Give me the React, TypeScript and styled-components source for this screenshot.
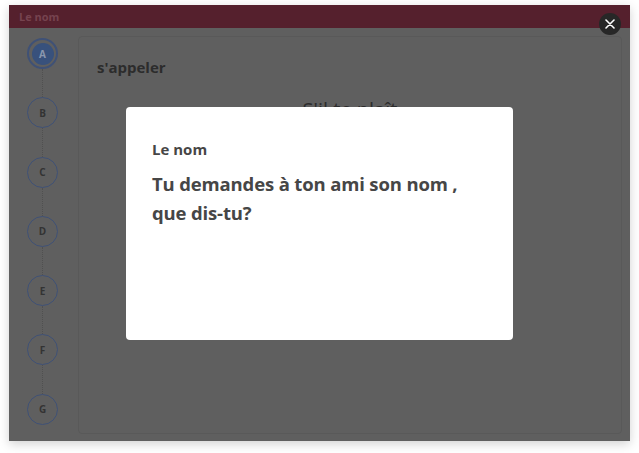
import React from 'react';
import styled, { createGlobalStyle } from 'styled-components';

const GlobalStyle = createGlobalStyle`
  html, body {
    margin: 0;
    padding: 0;
    background: #ffffff;
    font-family: "Open Sans", "Liberation Sans", sans-serif;
  }
`;

const steps = ['A', 'B', 'C', 'D', 'E', 'F', 'G'];

export default function App() {
  return (
    <>
      <GlobalStyle />
      <Page>
        <Window>
          <Header>
            <HeaderTitle>Le nom</HeaderTitle>
          </Header>
          <Body>
            <Rail>
              {steps.map((s, i) => (
                <React.Fragment key={s}>
                  {i > 0 && <Connector />}
                  <Step $active={i === 0}>
                    <StepLabel $active={i === 0}>{s}</StepLabel>
                  </Step>
                </React.Fragment>
              ))}
            </Rail>
            <Card>
              <CardTitle>s'appeler</CardTitle>
              <Prompt>S'il te plaît</Prompt>
            </Card>
          </Body>
          <Backdrop>
            <Modal>
              <ModalLabel>Le nom</ModalLabel>
              <ModalQuestion>
                Tu demandes à ton ami son nom ,<br />
                que dis-tu?
              </ModalQuestion>
            </Modal>
          </Backdrop>
          <CloseButton aria-label="Fermer">
            <svg width="10" height="10" viewBox="0 0 10 10">
              <path d="M1 1 L9 9 M9 1 L1 9" stroke="#ffffff" strokeWidth="1.6" strokeLinecap="round" />
            </svg>
          </CloseButton>
        </Window>
      </Page>
    </>
  );
}

const Page = styled.div`
  padding: 5px 9px 12px 9px;
  width: 639px;
  height: 453px;
  box-sizing: border-box;
`;

const Window = styled.div`
  position: relative;
  width: 621px;
  height: 436px;
  background: #5f5f5f;
  box-shadow: 0 3px 10px rgba(0, 0, 0, 0.18);
  display: flex;
  flex-direction: column;
`;

const Header = styled.div`
  height: 23px;
  background: #55202d;
  display: flex;
  align-items: center;
  padding-left: 10px;
  flex-shrink: 0;
`;

const HeaderTitle = styled.span`
  font-size: 11px;
  font-weight: 700;
  color: #76434f;
`;

const Body = styled.div`
  flex: 1;
  display: flex;
  padding: 8px 8px 7px 0;
  min-height: 0;
`;

const Rail = styled.div`
  width: 69px;
  flex-shrink: 0;
  display: flex;
  flex-direction: column;
  align-items: center;
  padding-top: 2px;
  padding-right: 2px;
  box-sizing: border-box;
`;

const Step = styled.div<{ $active?: boolean }>`
  width: 31px;
  height: 31px;
  border-radius: 50%;
  box-sizing: border-box;
  border: ${(p) => (p.$active ? '2px' : '1.5px')} solid #3f5176;
  display: flex;
  align-items: center;
  justify-content: center;
  flex-shrink: 0;
`;

const StepLabel = styled.span<{ $active?: boolean }>`
  width: ${(p) => (p.$active ? '22px' : 'auto')};
  height: ${(p) => (p.$active ? '22px' : 'auto')};
  border-radius: 50%;
  background: ${(p) => (p.$active ? '#38517c' : 'transparent')};
  color: ${(p) => (p.$active ? '#8a97ae' : '#333333')};
  font-size: 10px;
  font-weight: 700;
  display: flex;
  align-items: center;
  justify-content: center;
`;

const Connector = styled.div`
  height: 28.3px;
  width: 0;
  border-left: 1px dotted #505050;
  flex-shrink: 0;
`;

const Card = styled.div`
  flex: 1;
  border: 1px solid #595959;
  border-radius: 4px;
  padding: 20px 18px;
  box-sizing: border-box;
  display: flex;
  flex-direction: column;
  overflow: hidden;
`;

const CardTitle = styled.h2`
  margin: 0;
  font-size: 15px;
  font-weight: 700;
  color: #2c2c2c;
`;

const Prompt = styled.div`
  margin-top: 19px;
  text-align: center;
  font-size: 20px;
  color: #2c2c2c;
`;

const Backdrop = styled.div`
  position: absolute;
  inset: 0;
  display: flex;
  align-items: center;
  justify-content: center;
`;

const Modal = styled.div`
  width: 387px;
  height: 233px;
  background: #ffffff;
  border-radius: 4px;
  padding: 31px 26px;
  box-sizing: border-box;
  color: #464646;
`;

const ModalLabel = styled.div`
  font-size: 15px;
  font-weight: 700;
  line-height: 22px;
`;

const ModalQuestion = styled.div`
  margin-top: 9px;
  font-size: 18.5px;
  font-weight: 700;
  letter-spacing: -0.15px;
  line-height: 29px;
`;

const CloseButton = styled.button`
  position: absolute;
  top: 8px;
  right: 9px;
  width: 22px;
  height: 22px;
  border-radius: 50%;
  border: none;
  padding: 0;
  background: #272727;
  display: flex;
  align-items: center;
  justify-content: center;
  cursor: pointer;
`;
